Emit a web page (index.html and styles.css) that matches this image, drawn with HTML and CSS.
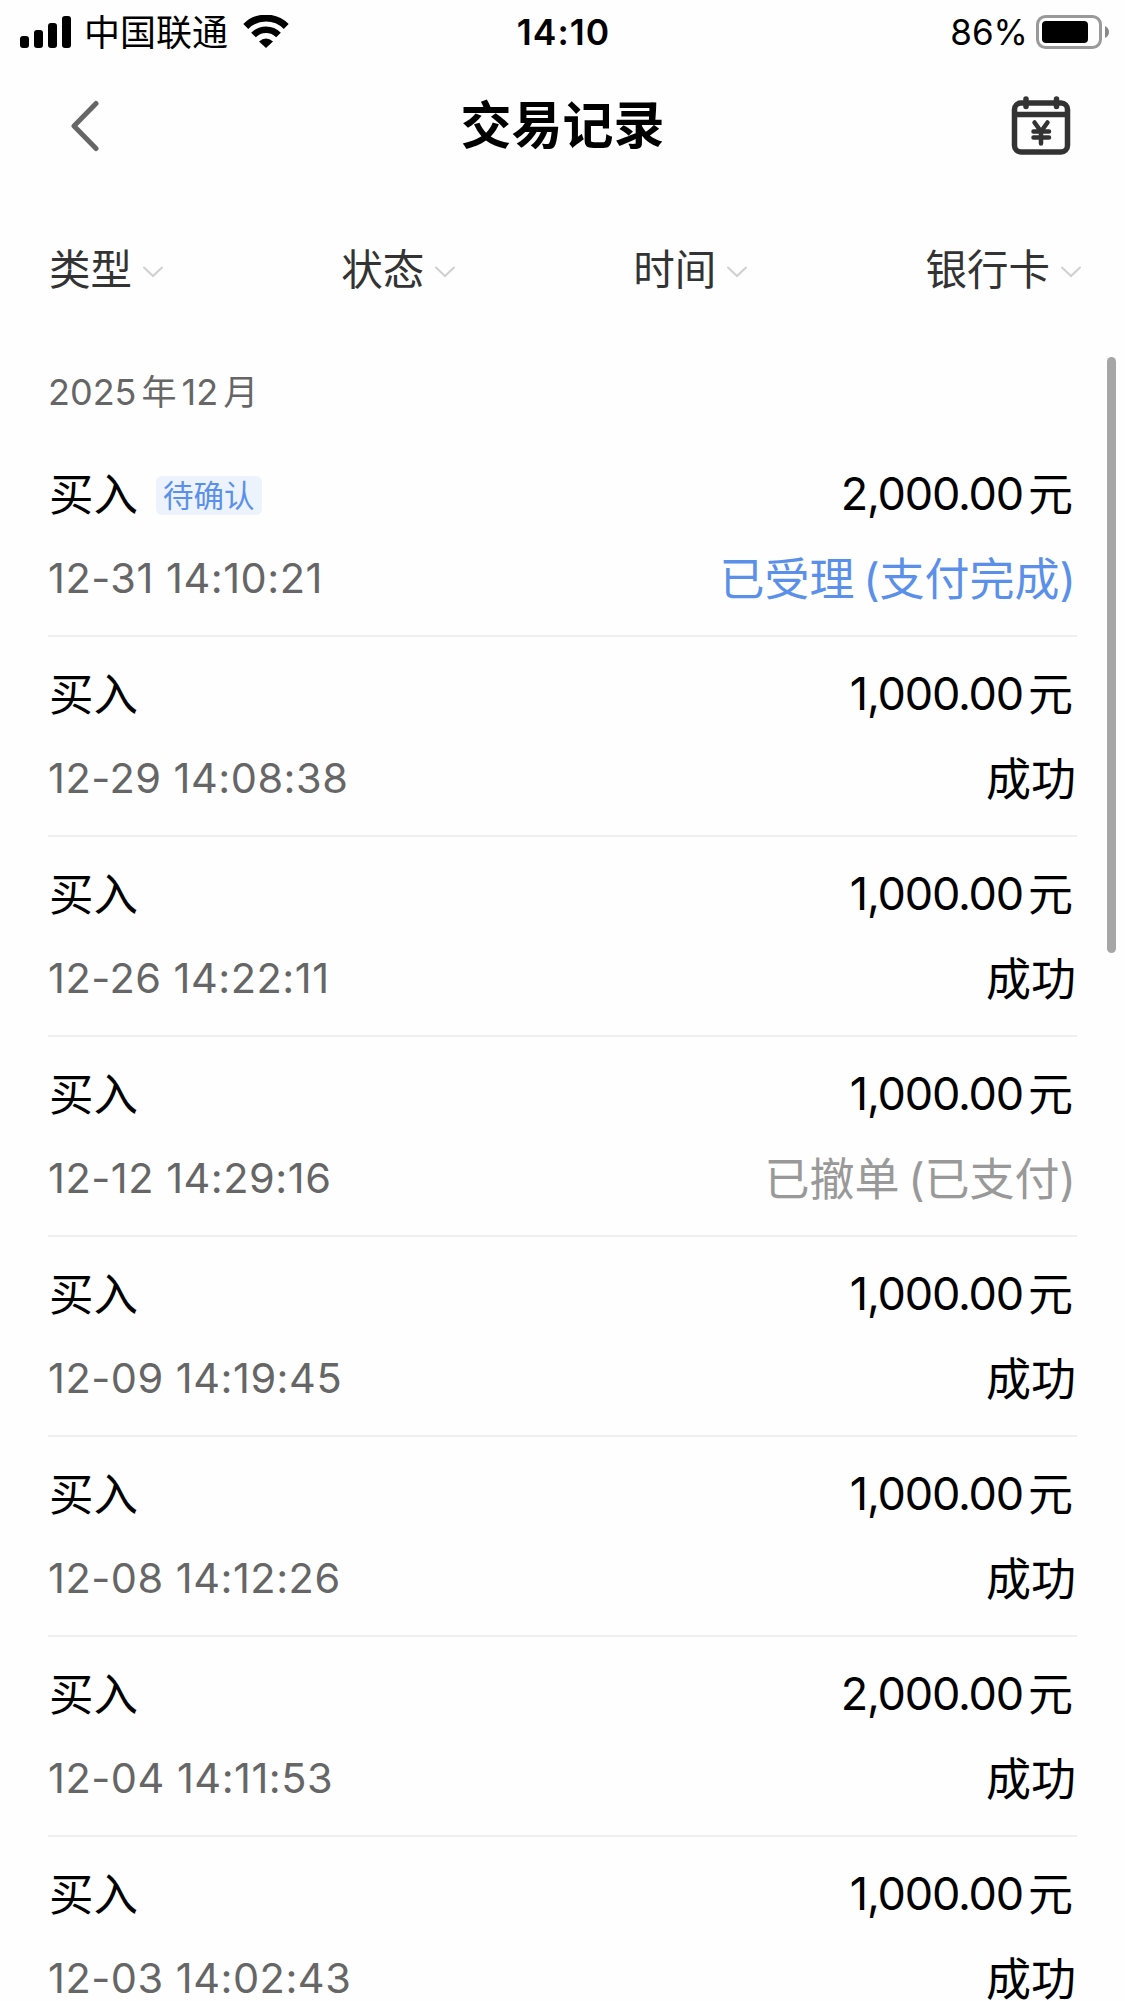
FILE: index.html
```
<!DOCTYPE html>
<html lang="zh-CN">
<head>
    <meta charset="UTF-8">
    <meta name="viewport" content="width=device-width, initial-scale=1.0">
    <title>交易记录</title>
    <link rel="stylesheet" href="styles.css">
</head>
<body>
<header class="status-bar">
    <div class="status-left">
        <svg class="signal" width="51" height="32" viewBox="0 0 51 32">
            <rect x="0" y="20" width="9" height="12" rx="3"/>
            <rect x="14" y="14" width="9" height="18" rx="3"/>
            <rect x="28" y="7" width="9" height="25" rx="3"/>
            <rect x="42" y="0" width="9" height="32" rx="3"/>
        </svg>
        <span class="carrier">中国联通</span>
        <svg class="wifi" width="46" height="33" viewBox="0 0 46 33">
            <path d="M2.800 11.500A28.500 28.500 0 0 1 43.200 11.500" fill="none" stroke="#000" stroke-width="7"/>
            <path d="M10.500 20A17.500 17.500 0 0 1 35.500 20" fill="none" stroke="#000" stroke-width="6.500"/>
            <path d="M16 26.400Q23 20.400 30 26.400L23 33Z"/>
        </svg>
    </div>
    <div class="clock">14:10</div>
    <div class="status-right">
        <span class="percent">86%</span>
        <svg class="battery" width="74" height="34" viewBox="0 0 74 34">
            <rect x="1.500" y="1.500" width="63" height="31" rx="8" fill="none" stroke="#999" stroke-width="3"/>
            <rect x="6" y="6" width="46" height="22" rx="4"/>
            <path d="M69 11Q73 13 73 17T69 23Z" fill="#888"/>
        </svg>
    </div>
</header>

<nav class="nav-bar">
    <svg class="back" width="28" height="52" viewBox="0 0 28 52">
        <path d="M25 3.500L3 26L25 48.500" fill="none" stroke="#666" stroke-width="5" stroke-linecap="round" stroke-linejoin="round"/>
    </svg>
    <h1 class="title">交易记录</h1>
    <svg class="calendar" width="60" height="60" viewBox="0 0 60 60" fill="none" stroke="#333" stroke-width="5.500">
        <rect x="3.500" y="7" width="53" height="49" rx="6.500"/>
        <path d="M3 18.500H57"/>
        <path d="M15 3V10.500M45.500 3V10.500" stroke-width="5.500" stroke-linecap="round"/>
        <path d="M23.500 26.500L30 35.500L36.500 26.500M30 35.500V47.500M22.500 35.500H38M22.500 41.500H38" stroke-width="4.500" stroke-linecap="round"/>
    </svg>
</nav>

<div class="filters">
    <div class="filter">类型<svg class="chevron" width="20" height="12" viewBox="0 0 20 12"><path d="M1 1.500L10 10L19 1.500"/></svg></div>
    <div class="filter">状态<svg class="chevron" width="20" height="12" viewBox="0 0 20 12"><path d="M1 1.500L10 10L19 1.500"/></svg></div>
    <div class="filter">时间<svg class="chevron" width="20" height="12" viewBox="0 0 20 12"><path d="M1 1.500L10 10L19 1.500"/></svg></div>
    <div class="filter">银行卡<svg class="chevron" width="20" height="12" viewBox="0 0 20 12"><path d="M1 1.500L10 10L19 1.500"/></svg></div>
</div>

<main class="records">
    <h2 class="month">2025<span class="unit">年</span>12<span class="unit">月</span></h2>
    <div class="record">
        <div class="line"><span class="type">买入</span><span class="tag">待确认</span><span class="amount">2,000.00</span><span class="yuan">元</span></div>
        <div class="line"><span class="time">12-31 14:10:21</span><span class="state pending">已受理 (支付完成)</span></div>
    </div>
    <div class="record">
        <div class="line"><span class="type">买入</span><span class="amount">1,000.00</span><span class="yuan">元</span></div>
        <div class="line"><span class="time">12-29 14:08:38</span><span class="state">成功</span></div>
    </div>
    <div class="record">
        <div class="line"><span class="type">买入</span><span class="amount">1,000.00</span><span class="yuan">元</span></div>
        <div class="line"><span class="time">12-26 14:22:11</span><span class="state">成功</span></div>
    </div>
    <div class="record">
        <div class="line"><span class="type">买入</span><span class="amount">1,000.00</span><span class="yuan">元</span></div>
        <div class="line"><span class="time">12-12 14:29:16</span><span class="state revoked">已撤单 (已支付)</span></div>
    </div>
    <div class="record">
        <div class="line"><span class="type">买入</span><span class="amount">1,000.00</span><span class="yuan">元</span></div>
        <div class="line"><span class="time">12-09 14:19:45</span><span class="state">成功</span></div>
    </div>
    <div class="record">
        <div class="line"><span class="type">买入</span><span class="amount">1,000.00</span><span class="yuan">元</span></div>
        <div class="line"><span class="time">12-08 14:12:26</span><span class="state">成功</span></div>
    </div>
    <div class="record">
        <div class="line"><span class="type">买入</span><span class="amount">2,000.00</span><span class="yuan">元</span></div>
        <div class="line"><span class="time">12-04 14:11:53</span><span class="state">成功</span></div>
    </div>
    <div class="record">
        <div class="line"><span class="type">买入</span><span class="amount">1,000.00</span><span class="yuan">元</span></div>
        <div class="line"><span class="time">12-03 14:02:43</span><span class="state">成功</span></div>
    </div>
</main>
<div class="scrollbar"></div>
</body>
</html>
```
FILE: styles.css
```
* {
    box-sizing: border-box;
}

body {
    margin: 0;
    height: 2001px;
    overflow: hidden;
    background: #fefefe;
    color: #000;
    font-family: Inter, "Noto Sans CJK SC", sans-serif;
}

svg {
    display: block;
    flex: none;
}

.status-bar {
    display: grid;
    grid-template-columns: 1fr auto 1fr;
    align-items: center;
    height: 62px;
    padding: 0 15px 0 20px;
}

.status-left, .status-right {
    display: flex;
    align-items: center;
}

.status-left {
    padding-bottom: 2px;
}

.status-right {
    justify-content: flex-end;
    padding-bottom: 2px;
}

.carrier {
    margin: 0 15px 0 13px;
    padding-top: 3px;
    font-size: 36px;
    line-height: 60px;
}

.clock {
    padding-right: 3px;
    font-size: 35.5px;
    font-weight: 600;
    letter-spacing: 1px;
}

.percent {
    margin-right: 8px;
    padding-top: 1px;
    font-size: 35px;
}

.nav-bar {
    display: flex;
    align-items: center;
    justify-content: space-between;
    height: 126px;
    padding: 2px 54px 0 71px;
}

.title {
    margin: 0;
    padding: 0 0 0 15px;
    font-size: 51px;
    font-weight: 600;
    line-height: 60px;
}

.filters {
    display: flex;
    justify-content: space-between;
    align-items: center;
    height: 162px;
    padding: 2px 44px 0 49px;
    color: #333;
    font-size: 41.5px;
    line-height: 60px;
}

.filter {
    display: flex;
    align-items: center;
}

.chevron {
    margin: 3px 0 0 11px;
    fill: none;
    stroke: #d0d0d0;
    stroke-width: 2;
    stroke-linecap: round;
}

.records {
    padding: 0 48px;
}

.month {
    margin: 0;
    height: 87px;
    padding-top: 12px;
    color: #666;
    font-size: 36px;
    font-weight: 400;
    line-height: 60px;
}

.unit {
    margin: 0 5px;
    font-size: 35px;
}

.record {
    height: 200px;
    padding-top: 26px;
    border-bottom: 2px solid #eee;
}

.line {
    display: flex;
    align-items: center;
    height: 60px;
    font-size: 45px;
    line-height: 60px;
}

.line + .line {
    margin-top: 25px;
}

.type {
    padding: 4px 0 0 1px;
    font-size: 44.5px;
}

.tag {
    margin: 4px 0 0 18px;
    padding: 0 7px;
    border-radius: 6px;
    background: #ecf3fd;
    color: #5a90ea;
    font-size: 30.5px;
    line-height: 39px;
}

.amount {
    margin-left: auto;
    padding-top: 2px;
    letter-spacing: -1.2px;
}

.yuan {
    margin: 4px 4px 0 5px;
}

.state {
    margin: 4px 1px 0 auto;
    word-spacing: -4px;
}

.time {
    color: #666;
    font-size: 41.5px;
    letter-spacing: 0.5px;
}

.pending {
    color: #5a90ea;
}

.revoked {
    color: #999;
}

.scrollbar {
    position: absolute;
    top: 357px;
    left: 1107px;
    width: 9px;
    height: 596px;
    border-radius: 5px;
    background: #a6a6a6;
}
```
